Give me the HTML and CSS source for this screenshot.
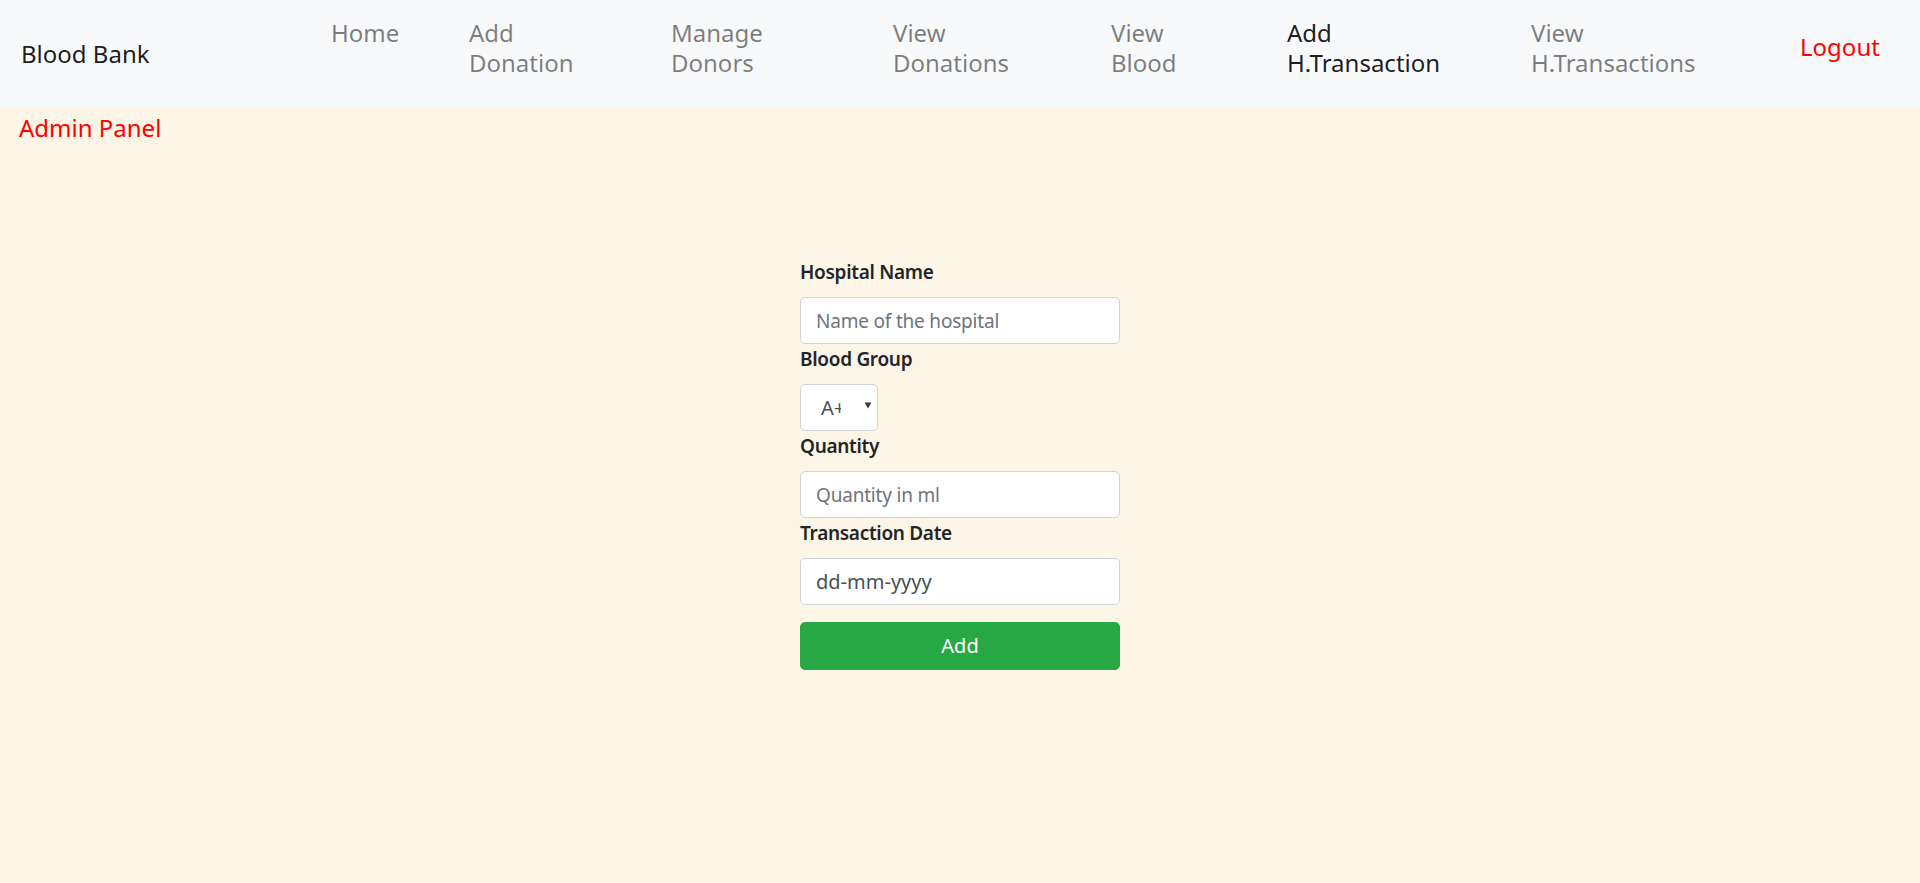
FILE: index.html
```html
<!DOCTYPE html>
<html lang="en">
<head>
<meta charset="utf-8">
<title>Blood Bank - Add H.Transaction</title>
<link rel="stylesheet" href="styles.css">
</head>
<body>
<nav class="navbar">
  <a class="brand" href="#">Blood Bank</a>
  <ul class="nav-links">
    <li><a class="nav-link" href="#">Home</a></li>
    <li><a class="nav-link" href="#">Add Donation</a></li>
    <li><a class="nav-link" href="#">Manage Donors</a></li>
    <li><a class="nav-link" href="#">View Donations</a></li>
    <li><a class="nav-link" href="#">View Blood</a></li>
    <li><a class="nav-link active" href="#">Add H.Transaction</a></li>
    <li><a class="nav-link" href="#">View H.Transactions</a></li>
  </ul>
  <a class="logout" href="#">Logout</a>
</nav>
<h5 class="panel-title">Admin Panel</h5>
<main class="content">
  <form class="tx-form">
    <label class="form-label" for="hname">Hospital Name</label>
    <input class="form-control" id="hname" type="text" placeholder="Name of the hospital">
    <label class="form-label">Blood Group</label>
    <div class="select-box">
      <span class="select-value">A+</span>
      <svg class="select-arrow" width="8" height="7" viewBox="0 0 8 7"><polygon points="0.5,0.5 7.5,0.5 4,6.5" fill="#3a3a3a"/></svg>
    </div>
    <label class="form-label" for="qty">Quantity</label>
    <input class="form-control" id="qty" type="text" placeholder="Quantity in ml">
    <label class="form-label" for="tdate">Transaction Date</label>
    <input class="form-control date-control" id="tdate" type="text" placeholder="dd-mm-yyyy">
    <button class="btn-add" type="button">Add</button>
  </form>
</main>
</body>
</html>
```

FILE: styles.css
```css
body {
  margin: 0;
  background: #fdf5e6;
  font-family: "Noto Sans", "Open Sans", sans-serif;
  font-size: 20px;
  line-height: 1.5;
  color: #212529;
}

.navbar {
  display: flex;
  align-items: center;
  height: 107px;
  box-sizing: border-box;
  padding-left: 21px;
  background: #f8f9fa;
}

.brand {
  flex: 0 0 310px;
  font-size: 24px;
  line-height: 30px;
  color: rgba(0, 0, 0, 0.9);
  text-decoration: none;
}

.nav-links {
  list-style: none;
  margin: 0;
  padding: 18px 0 0;
  align-self: flex-start;
  display: grid;
  grid-template-columns: 138px 202px 222px 218px 176px 244px 269px;
}

.nav-link {
  display: block;
  width: min-content;
  font-size: 24px;
  line-height: 30px;
  color: rgba(0, 0, 0, 0.5);
  text-decoration: none;
}

.nav-link.active {
  color: rgba(0, 0, 0, 0.9);
}

.logout {
  align-self: flex-start;
  margin-top: 32px;
  font-size: 24px;
  line-height: 30px;
  color: #ff0000;
  text-decoration: none;
}

.panel-title {
  margin: 6px 0 0 19px;
  font-size: 24px;
  line-height: 30px;
  font-weight: 400;
  color: #ff0000;
}

.content {
  display: flex;
  justify-content: center;
  padding-top: 114px;
}

.tx-form {
  width: 320px;
  display: flex;
  flex-direction: column;
}

.form-label {
  font-size: 19px;
  letter-spacing: -0.3px;
  font-weight: 600;
  line-height: 30px;
  margin-bottom: 10px;
}

.form-control {
  height: 47px;
  box-sizing: border-box;
  padding: 7.5px 15px;
  font-family: inherit;
  font-size: 19px;
  letter-spacing: -0.2px;
  line-height: 30px;
  color: #495057;
  background: #fff;
  border: 1px solid #ced4da;
  border-radius: 5px;
  outline: none;
}

.form-control::placeholder {
  color: #6c757d;
}

.date-control {
  font-size: 20px;
  letter-spacing: 0;
}

.date-control::placeholder {
  color: #495057;
}

.select-box {
  width: 78px;
  height: 47px;
  box-sizing: border-box;
  display: flex;
  align-items: center;
  padding-left: 20px;
  background: #fff;
  border: 1px solid #ced4da;
  border-radius: 5px;
  color: #495057;
}

.select-value {
  width: 20px;
  overflow: hidden;
  white-space: nowrap;
  line-height: 30px;
}

.select-arrow {
  margin-left: 23px;
  margin-top: -4px;
}

.btn-add {
  margin-top: 17px;
  height: 48px;
  font: inherit;
  color: #fff;
  background: #28a745;
  border: 1px solid #28a745;
  border-radius: 5px;
}
```
